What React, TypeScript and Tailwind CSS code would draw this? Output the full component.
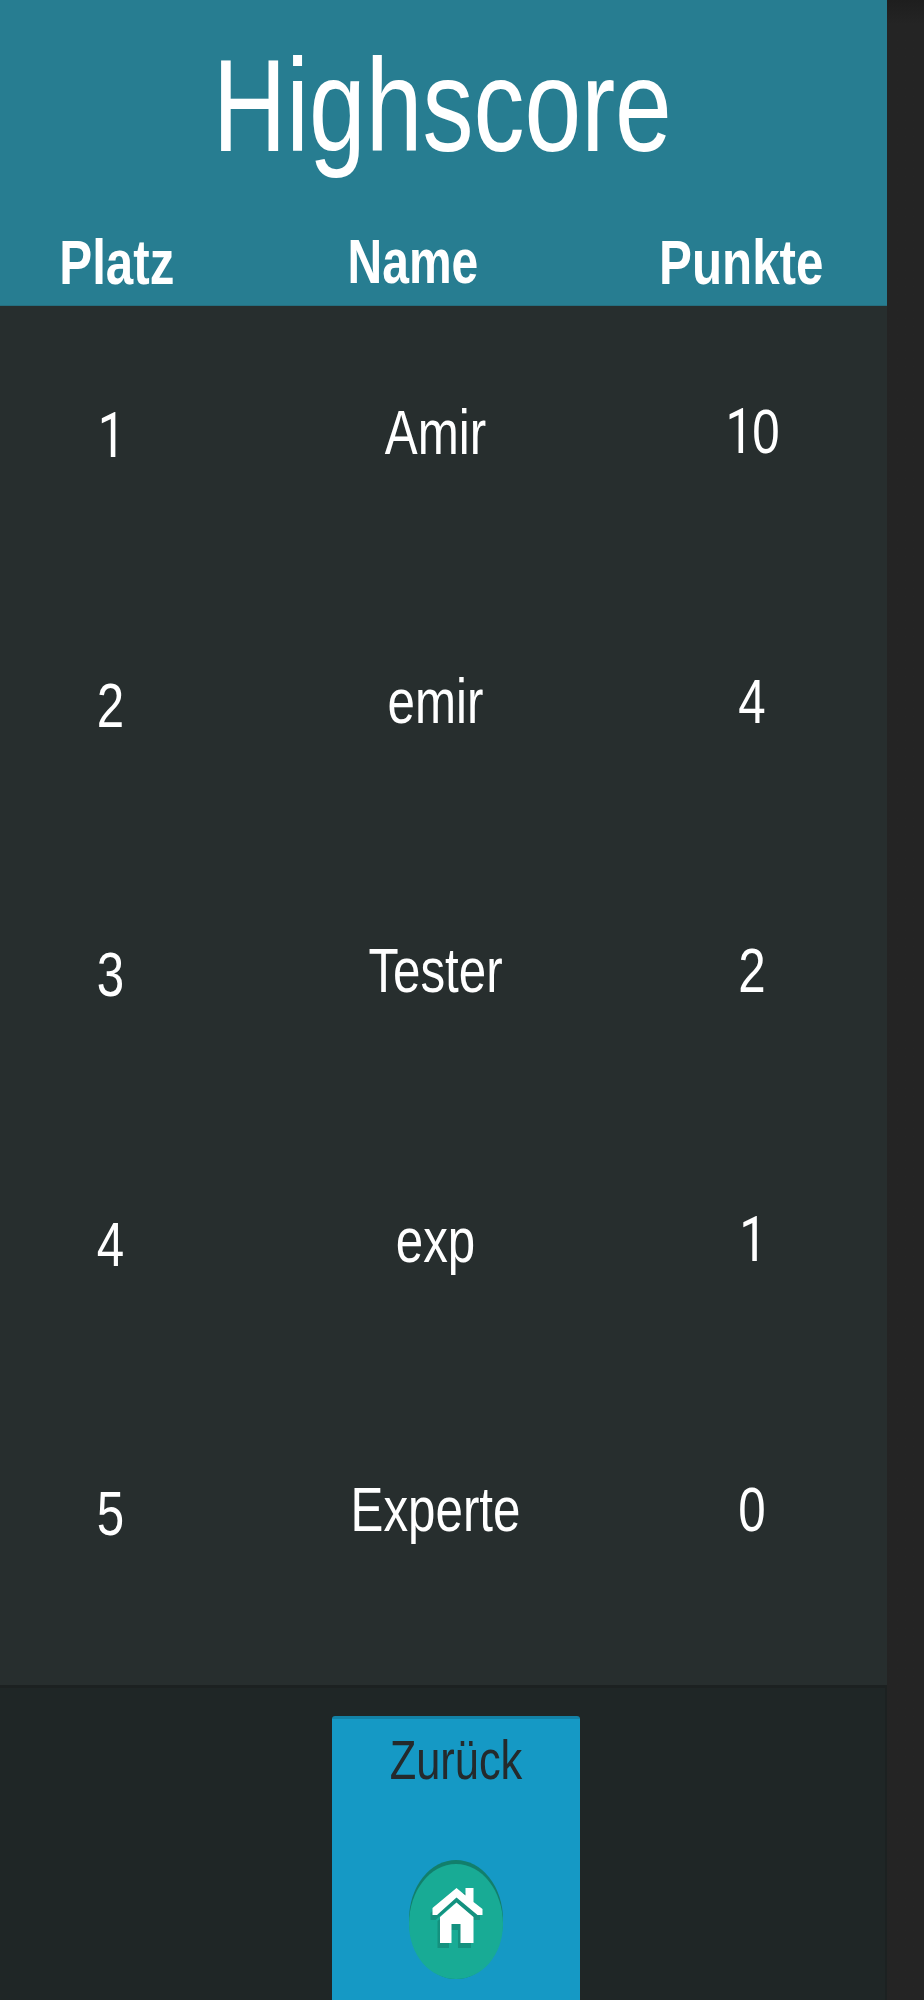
interface ScoreEntry {
  rank: number;
  name: string;
  points: number;
}

const scores: ScoreEntry[] = [
  { rank: 1, name: 'Amir', points: 10 },
  { rank: 2, name: 'emir', points: 4 },
  { rank: 3, name: 'Tester', points: 2 },
  { rank: 4, name: 'exp', points: 1 },
  { rank: 5, name: 'Experte', points: 0 },
];

// Roboto's "1" has no foot serif, the other digits stay in the page font
function Figure({ value }: { value: number }) {
  return (
    <>
      {String(value).split('').map((digit, index) => (
        <span key={index} className={digit === '1' ? 'pl-[1px] -mr-[1px] font-[Roboto,sans-serif]' : undefined}>
          {digit}
        </span>
      ))}
    </>
  );
}

function HomeIcon() {
  return (
    <svg className="w-[94px] h-[119px] block" viewBox="0 0 94 119" fill="none">
      <ellipse cx="47" cy="59.5" rx="47" ry="59.5" fill="#127f6c" />
      <path d="M0 64C0 31 21 4 47 4s47 27 47 60c0 31-21 55-47 55S0 95 0 64z" fill="#18ab95" />
      <g transform="translate(-2.5 5)" fill="#14917f">
        <path d="M24 48L47.5 28l9 8v-8h8v14l9 7v6h-6L47.5 38 29 55h-5z" />
        <path d="M31 56l16.5-13L64.5 55v28h-13V64h-9v19H31z" />
      </g>
      <path d="M42 64h10v6H42z" fill="#14917f" />
      <path d="M31 57l16.5-14.5L64.5 57v26h-13V64h-9v19H31z" fill="#fff" />
      <path d="M28 56l19.5-16.5L67 56" stroke="#14917f" strokeWidth="3.5" />
      <path d="M23.5 48L47.5 28l9 7.5V28h8v14l9 7v6h-5l-21-17.5L28 55h-4.5z" fill="#fff" />
    </svg>
  );
}

export default function App() {
  return (
    <div className="w-[924px] h-[2000px] flex overflow-hidden bg-[#242424] font-['Liberation_Sans',Arial,sans-serif] text-white">
      <main className="w-[886.5px] h-full flex flex-col shrink-0 bg-[#272e2e]">
        <header className="h-[306px] shrink-0 bg-[#277d91] border-b border-[#256f80]">
          <h1 className="h-[207px] flex items-center justify-center pt-[4px] pr-[2px] text-[102px] leading-none">
            <span className="inline-block scale-y-[1.285]">Highscore</span>
          </h1>
          <div className="h-[109px] pt-px grid grid-cols-[233.6px_358.7px_298px] items-center text-center text-[49.3px] leading-none font-bold">
            <span className="scale-y-[1.28]">Platz</span>
            <span className="scale-y-[1.33] text-[48px]">Name</span>
            <span className="scale-y-[1.28]">Punkte</span>
          </div>
        </header>

        {/* Score list */}
        <ul className="h-[1379px] shrink-0 flex flex-col gap-[214.5px] pt-[97px]">
          {scores.map((entry) => (
            <li
              key={entry.rank}
              className="h-[55px] shrink-0 grid grid-cols-[221px_429px_204px] items-center text-center text-[49.3px] leading-none"
            >
              <span className="scale-y-[1.28] pt-[6px]">
                <Figure value={entry.rank} />
              </span>
              <span className="scale-y-[1.29]">{entry.name}</span>
              <span className="scale-y-[1.29]">
                <Figure value={entry.points} />
              </span>
            </li>
          ))}
        </ul>

        <footer className="h-[315px] shrink-0 bg-[#1f2626] border-t-[3px] border-r-2 border-[#1c2121] pl-[332px] pt-[28px]">
          <button className="w-[248px] h-[284px] flex flex-col items-center rounded-t-[3px] bg-[#1599c5] border-t-[3px] border-[#1382a7] pt-[15px] text-[43.4px] leading-none text-[#242a2c]">
            <span className="h-[50px] leading-[50px] scale-y-[1.3]">Zurück</span>
            <span className="mt-[76px]">
              <HomeIcon />
            </span>
          </button>
        </footer>
      </main>
      <aside className="grow bg-linear-to-b from-[#1e1e1e] to-[#242424] to-[24px]" />
    </div>
  );
}
